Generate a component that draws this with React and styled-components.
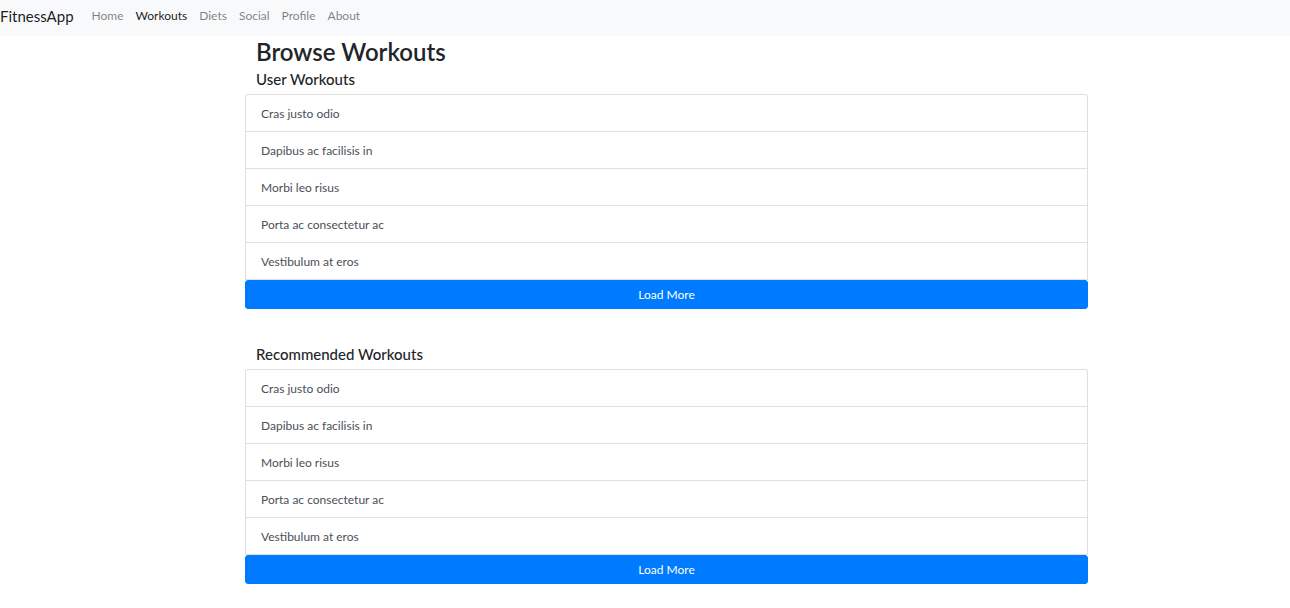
import React from 'react';
import styled, { createGlobalStyle } from 'styled-components';

const Global = createGlobalStyle`
	body {
		margin: 0;
		background: #fff;
		font-family: Lato, "Noto Sans", sans-serif;
		color: #212529;
	}
`;

const Nav = styled.nav`
	height: 36px;
	box-sizing: border-box;
	padding-bottom: 5px;
	display: flex;
	align-items: center;
	background-color: #f8f9fa;
`;

const Brand = styled.a`
	font-size: 15px;
	color: rgba(0, 0, 0, 0.9);
	text-decoration: none;
	margin-right: 12px;
`;

const Links = styled.div`
	display: flex;
`;

const NavLink = styled.a`
	font-size: 12px;
	padding: 0 6px;
	text-decoration: none;
	color: ${(p) => (p.active ? 'rgba(0, 0, 0, 0.9)' : 'rgba(0, 0, 0, 0.5)')};
`;

const Main = styled.main`
	width: 843px;
	margin-left: 245px;
	padding-top: 2px;
`;

const Title = styled.h2`
	margin: 0 0 3px;
	padding: 0 11px;
	font-size: 24px;
	font-weight: 600;
	line-height: 1.2;
`;

const Section = styled.section`
	& + & {
		margin-top: 36px;
	}
`;

const Subtitle = styled.h5`
	margin: 0 0 6px;
	padding: 0 11px;
	font-size: 15px;
	font-weight: 500;
	line-height: 18px;
`;

const List = styled.ul`
	list-style: none;
	margin: 0;
	padding: 0;
	border: 1px solid rgba(0, 0, 0, 0.125);
	border-bottom: none;
	border-radius: 3px 3px 0 0;
`;

const Item = styled.li`
	padding: 10px 15px 8px;
	font-size: 12px;
	line-height: 18px;
	color: #495057;
	border-bottom: 1px solid rgba(0, 0, 0, 0.125);
`;

const Button = styled.button`
	display: block;
	width: 100%;
	height: 29px;
	padding: 2px 0 0;
	border: 1px solid #007bff;
	border-radius: 3px;
	background-color: #007bff;
	color: #fff;
	font-family: inherit;
	font-size: 12px;
	line-height: 18px;
	cursor: pointer;
`;

const items = [
	'Cras justo odio',
	'Dapibus ac facilisis in',
	'Morbi leo risus',
	'Porta ac consectetur ac',
	'Vestibulum at eros',
];

function WorkoutList({title}) {
	return (
		<Section>
			<Subtitle>{title}</Subtitle>
			<List>
				{items.map((t) => (
					<Item key={t}>{t}</Item>
				))}
			</List>
			<Button>Load More</Button>
		</Section>
	);
}

export default function App() {
	return (
		<>
			<Global />
			<Nav>
				<Brand href="#">FitnessApp</Brand>
				<Links>
					<NavLink href="#">Home</NavLink>
					<NavLink href="#" active>Workouts</NavLink>
					<NavLink href="#">Diets</NavLink>
					<NavLink href="#">Social</NavLink>
					<NavLink href="#">Profile</NavLink>
					<NavLink href="#">About</NavLink>
				</Links>
			</Nav>
			<Main>
				<Title>Browse Workouts</Title>
				<WorkoutList title="User Workouts" />
				<WorkoutList title="Recommended Workouts" />
			</Main>
		</>
	);
}
